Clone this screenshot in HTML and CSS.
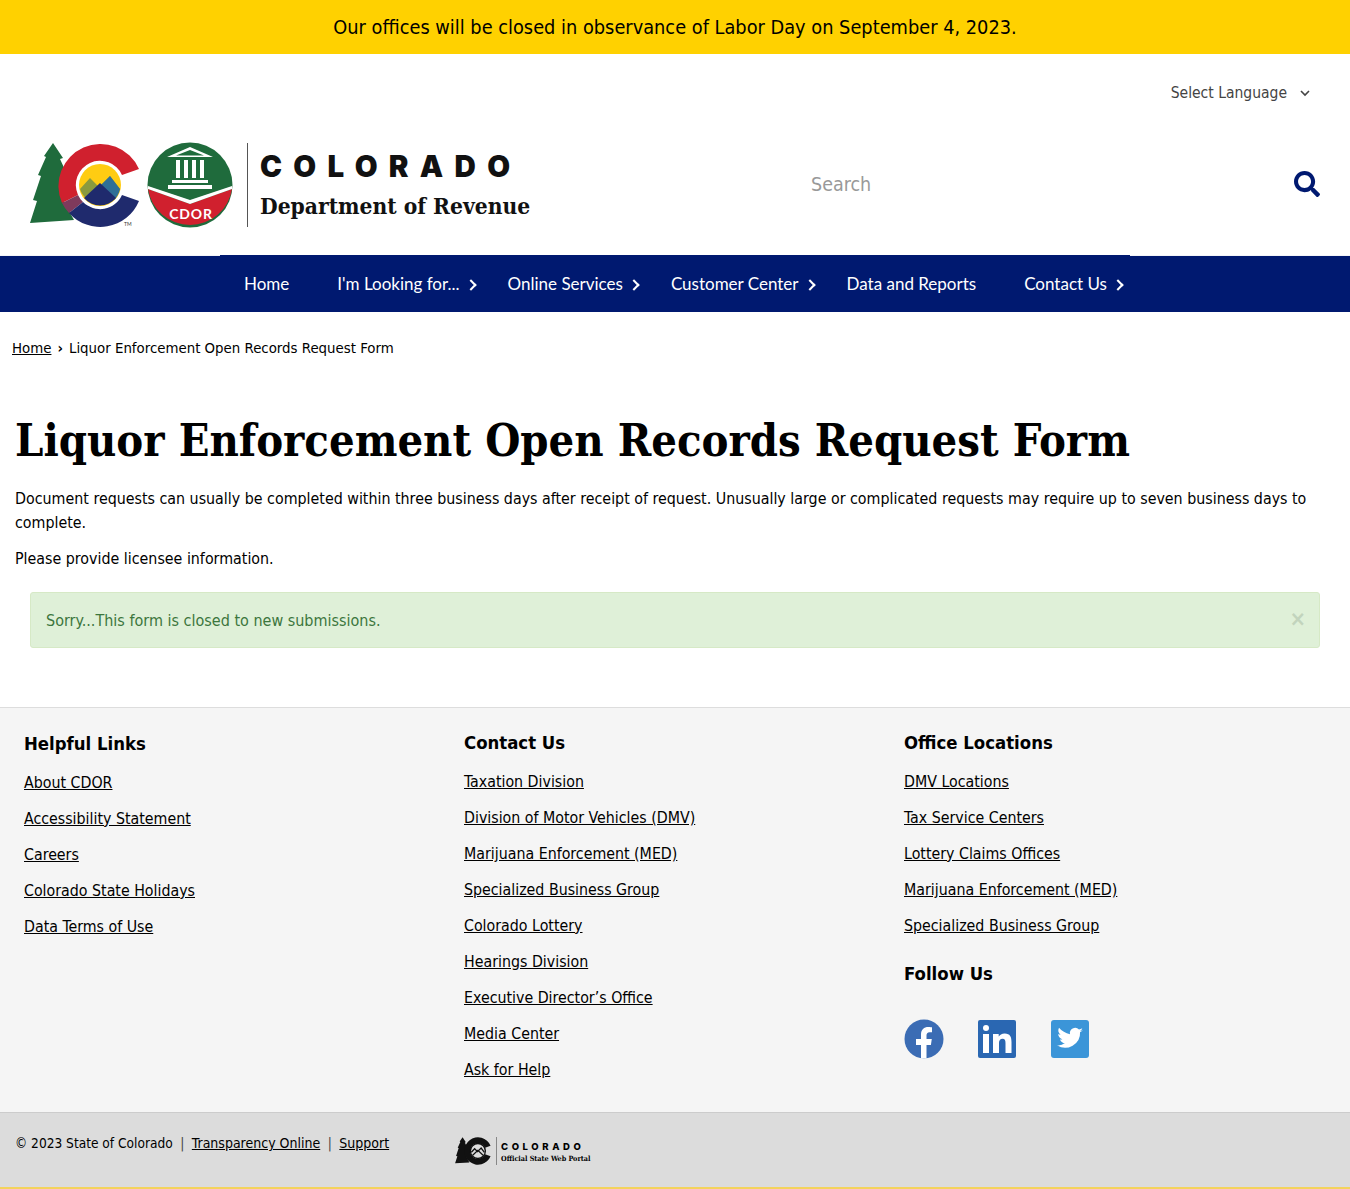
FILE: index.html
```html
<!DOCTYPE html>
<html lang="en">
<head>
<meta charset="utf-8">
<title>Liquor Enforcement Open Records Request Form</title>
<link rel="stylesheet" href="styles.css">
</head>
<body>
<div class="banner">Our offices will be closed in observance of Labor Day on September 4, 2023.</div>
<header class="header">
  <div class="lang-row">
    <span class="lang">Select Language</span>
    <svg class="lang-chev" width="10" height="7" viewBox="0 0 10 7"><path d="M1 1l4 4 4-4" fill="none" stroke="#444" stroke-width="1.6"/></svg>
  </div>
  <div class="brand-row">
    <div class="logo">
      <svg class="logo-marks" width="205" height="86" viewBox="0 0 205 86">
        <path d="M23 1 L33 16 L30 17 L36 30 L34 60 L44 78 L0 81 L7 59 L3 58 L11 34 L8 33 L16 15 L14 14 Z" fill="#1f6b3c"/>
        <path d="M109 27 A42 42 0 0 0 32 61 L48 53 A24 24 0 0 1 92 33 Z" fill="#d0202e"/>
        <path d="M32 61 A42 42 0 0 0 39 71 L53 60 A24 24 0 0 1 48 53 Z" fill="#7f3a5c"/>
        <path d="M39 71 A42 42 0 0 0 109 59 L92 53 A24 24 0 0 1 53 60 Z" fill="#1f2a6d"/>
        <circle cx="70" cy="43" r="23" fill="#fff"/>
        <circle cx="70" cy="43" r="21" fill="#ffcc12"/>
        <path d="M50 47 L60 36 L69 45 L80 34 L90 47 A21 21 0 0 1 50 47 Z" fill="#8a9a3e"/>
        <path d="M69 45 L80 34 L90 47 A21 21 0 0 1 84 58 Z" fill="#2f6f96"/>
        <path d="M54 56 L70 41 L86 56 A21 21 0 0 1 54 56 Z" fill="#1f2a6d"/>
        <text class="tm" x="94" y="84">TM</text>
        <circle cx="160" cy="43" r="42.500" fill="#1f6b3c"/>
        <path d="M118 47 L160 62 L202 47 A42.500 42.500 0 0 1 118 47 Z" fill="#d0202e"/>
        <path d="M118 44 L160 58 L202 44 L202 47 L160 62 L118 47 Z" fill="#fff"/>
        <path d="M160 5 L183 15 L137 15 Z M160 8 L146 13.500 H174 Z" fill="#fff" fill-rule="evenodd"/>
        <path d="M146 18h4v18h-4zM154 18h4v18h-4zM162 18h4v18h-4zM170 18h4v18h-4z" fill="#fff"/>
        <path d="M142 38h36v3h-36zM138 43h44v4h-44z" fill="#fff"/>
        <text class="cdor" x="161" y="77" text-anchor="middle">CDOR</text>
      </svg>
      <span class="logo-rule"></span>
      <div class="logo-text">
        <span class="logo-co">COLORADO</span>
        <span class="logo-dept">Department of Revenue</span>
      </div>
    </div>
    <div class="search">
      <span class="search-ph">Search</span>
      <svg class="search-icon" width="26" height="26" viewBox="0 0 512 512"><path fill="#001970" d="M505 442.700 405.300 343c-4.500-4.500-10.600-7-17-7H372c27.600-35.300 44-79.700 44-128C416 93.100 322.900 0 208 0S0 93.100 0 208s93.100 208 208 208c48.300 0 92.700-16.400 128-44v16.300c0 6.400 2.500 12.500 7 17l99.700 99.700c9.400 9.400 24.600 9.400 33.900 0l28.300-28.300c9.400-9.400 9.400-24.600.1-34zM208 336c-70.700 0-128-57.200-128-128 0-70.700 57.200-128 128-128 70.700 0 128 57.200 128 128 0 70.700-57.200 128-128 128z"/></svg>
    </div>
  </div>
</header>
<nav class="nav">
  <div class="nav-list">
    <a class="nav-item">Home</a>
    <a class="nav-item has-sub">I'm Looking for...</a>
    <a class="nav-item has-sub">Online Services</a>
    <a class="nav-item has-sub">Customer Center</a>
    <a class="nav-item">Data and Reports</a>
    <a class="nav-item has-sub">Contact Us</a>
  </div>
</nav>
<div class="crumbs"><a href="#">Home</a><span class="crumb-sep">›</span><span>Liquor Enforcement Open Records Request Form</span></div>
<main class="main">
  <h1 class="title">Liquor Enforcement Open Records Request Form</h1>
  <p class="para">Document requests can usually be completed within three business days after receipt of request. Unusually large or complicated requests may require up to seven business days to complete.</p>
  <p class="para">Please provide licensee information.</p>
  <div class="alert"><span>Sorry...This form is closed to new submissions.</span><span class="alert-x">×</span></div>
</main>
<footer class="footer">
  <div class="col col-first">
    <h2 class="col-h">Helpful Links</h2>
    <ul class="links">
      <li><a href="#">About CDOR</a></li>
      <li><a href="#">Accessibility Statement</a></li>
      <li><a href="#">Careers</a></li>
      <li><a href="#">Colorado State Holidays</a></li>
      <li><a href="#">Data Terms of Use</a></li>
    </ul>
  </div>
  <div class="col">
    <h2 class="col-h">Contact Us</h2>
    <ul class="links">
      <li><a href="#">Taxation Division</a></li>
      <li><a href="#">Division of Motor Vehicles (DMV)</a></li>
      <li><a href="#">Marijuana Enforcement (MED)</a></li>
      <li><a href="#">Specialized Business Group</a></li>
      <li><a href="#">Colorado Lottery</a></li>
      <li><a href="#">Hearings Division</a></li>
      <li><a href="#">Executive Director’s Office</a></li>
      <li><a href="#">Media Center</a></li>
      <li><a href="#">Ask for Help</a></li>
    </ul>
  </div>
  <div class="col">
    <h2 class="col-h">Office Locations</h2>
    <ul class="links">
      <li><a href="#">DMV Locations</a></li>
      <li><a href="#">Tax Service Centers</a></li>
      <li><a href="#">Lottery Claims Offices</a></li>
      <li><a href="#">Marijuana Enforcement (MED)</a></li>
      <li><a href="#">Specialized Business Group</a></li>
    </ul>
    <h2 class="col-h follow">Follow Us</h2>
    <div class="social">
      <svg width="40" height="40" viewBox="0 0 40 40"><circle cx="20" cy="20" r="19.500" fill="#3b6cb4"/><path d="M17 39.500V26h-5v-6h5v-4.500C17 10.500 20 8 24.300 8c2 0 3.700.3 3.700.3v5h-2.300c-2.400 0-3.200 1.500-3.200 3V20h5.300l-.9 6h-4.400v13.500z" fill="#fff"/></svg>
      <svg width="40" height="40" viewBox="0 0 40 40"><rect x="1" y="1" width="38" height="38" rx="2" fill="#2a67b2"/><circle cx="9" cy="9" r="3" fill="#fff"/><path d="M6 15h6v19H6zM16 15h5.700v2.600c1-1.700 3-3.100 6-3.100 5.500 0 6.800 3.500 6.800 8.500V34h-6V24c0-2.600-.5-4.300-2.900-4.300-2.500 0-3.600 1.700-3.600 4.300v10h-6z" fill="#fff"/></svg>
      <svg width="40" height="40" viewBox="0 0 40 40"><rect x="1" y="1" width="38" height="38" rx="3" fill="#3b95d8"/><path d="M33 11.300c-1 .4-2 .7-3 .8 1.100-.7 1.900-1.700 2.300-2.900-1 .6-2.100 1-3.300 1.300a5.300 5.300 0 0 0-9 4.800C15.600 14.100 11.700 12 9 8.800c-1.400 2.400-.7 5.500 1.600 7-.8 0-1.600-.2-2.400-.7 0 2.500 1.800 4.700 4.200 5.200-.8.200-1.600.2-2.400.1.700 2.100 2.600 3.600 4.900 3.700A10.700 10.700 0 0 1 7 26.300 15 15 0 0 0 30.100 13c1.100-.4 2.100-1 2.900-1.700z" fill="#fff"/></svg>
    </div>
  </div>
</footer>
<div class="legal">
  <div class="legal-text">© 2023 State of Colorado<span class="pipe">|</span><a href="#">Transparency Online</a><span class="pipe">|</span><a href="#">Support</a></div>
  <div class="portal">
    <svg width="36" height="28" viewBox="0 0 110 86">
      <path d="M23 1 L33 16 L30 17 L36 30 L34 60 L44 78 L0 81 L7 59 L3 58 L11 34 L8 33 L16 15 L14 14 Z" fill="#111"/>
      <path d="M109 27 A42 42 0 1 0 109 59 L92 53 A24 24 0 1 1 92 33 Z" fill="#111"/>
      <circle cx="70" cy="43" r="23" fill="#ddd" stroke="#111" stroke-width="4"/>
      <path d="M50 47 L60 36 L69 45 L80 34 L90 47 M54 56 L70 41 L86 56" fill="none" stroke="#111" stroke-width="4"/>
    </svg>
    <span class="portal-rule"></span>
    <div class="portal-text"><span class="portal-co">COLORADO</span><span class="portal-sub">Official State Web Portal</span></div>
  </div>
</div>
</body>
</html>
```
FILE: styles.css
```css
* { box-sizing: border-box; }
html, body { margin: 0; padding: 0; }
body { font-family: "DejaVu Sans", sans-serif; font-stretch: condensed; font-size: 15.850px; color: #000; background: #fff; height: 1189px; overflow: hidden; }
a { color: inherit; }
.banner { height: 54px; background: #ffd100; display: flex; align-items: center; justify-content: center; font-size: 19.800px; }
.header { height: 201px; display: flex; flex-direction: column; padding: 0 30px; }
.lang-row { height: 76px; padding-top: 28px; display: flex; justify-content: flex-end; align-items: flex-start; color: #444; padding-right: 10px; font-size: 15.500px; }
.lang { line-height: 22px; }
.lang-chev { margin: 8px 0 0 13px; }
.brand-row { display: flex; align-items: flex-start; justify-content: space-between; padding-top: 12px; }
.logo { display: flex; align-items: center; }
.cdor { font: bold 14px "Lato", sans-serif; fill: #fff; letter-spacing: .8px; }
.tm { font: 5px "Lato", sans-serif; fill: #333; }
.logo-rule { width: 1px; height: 84px; background: #555; margin: 0 12px; }
.logo-text { display: flex; flex-direction: column; }
.logo-co { font: 900 29.500px/34px "Inter", sans-serif; letter-spacing: 11.300px; color: #111; }
.logo-dept { font: bold 22.600px/30px "DejaVu Serif", serif; font-stretch: condensed; color: #111; margin-top: 8px; }
.search { width: 509px; display: flex; justify-content: space-between; align-items: center; height: 84px; }
.search-ph { font-size: 19.500px; color: #999; }
.nav { height: 57px; background: #001970; border-top: 1px solid #f4f4f8; display: flex; justify-content: center; font-family: "Lato", sans-serif; font-stretch: normal; font-size: 17px; color: #fff; }
.nav-list { width: 910px; height: 57px; margin-top: -1px; padding: 0 0 0 24px; background: #001970; display: flex; align-items: center; gap: 48px; }
.nav-item { position: relative; }
.has-sub::after { content: ""; position: absolute; left: 100%; top: 8px; margin-left: 7px; width: 6px; height: 6px; border-top: 2px solid #fff; border-right: 2px solid #fff; transform: rotate(45deg); }
.crumbs { padding: 24px 12px 0; font-size: 14.850px; line-height: 24px; height: 72px; }
.crumb-sep { margin: 0 6px; font-weight: bold; }
.main { padding: 0 15px; height: 323px; }
.title { font: bold 44.900px/56px "DejaVu Serif", serif; font-stretch: condensed; margin: 0; padding-top: 29px; height: 91px; }
.para { margin: 12px 0 12px; line-height: 24px; }
.alert { margin: 21px 15px 0; height: 56px; background: #dff0d8; border: 1px solid #d6e9c6; border-radius: 3px; color: #3c763d; font-size: 16px; display: flex; align-items: center; justify-content: space-between; padding: 0 13px 0 15px; }
.alert-x { font-size: 22px; font-weight: bold; color: #c2d4bd; padding-bottom: 3px; }
.footer { height: 405px; background: #f5f5f5; border-top: 1px solid #ddd; display: grid; grid-template-columns: repeat(3, 440px); padding: 23px 24px 0; font-size: 15.800px; }
.col-first { padding-top: 1px; }
.col-h { font-size: 18.400px; font-weight: bold; line-height: 24px; margin: 0 0 15px; }
.links { list-style: none; margin: 0; padding: 0; }
.links li { height: 36px; line-height: 24px; }
.follow { margin-top: 12px; }
.social { display: flex; gap: 33px; margin-top: 33px; }
.legal { height: 77px; background: #dcdcdc; border-top: 1px solid #ccc; border-bottom: 2px solid #f3d35c; padding: 20px 15px 0; display: flex; font-size: 13.600px; }
.legal a { font-size: 14px; }
.legal-text { width: 440px; line-height: 20px; }
.pipe { margin: 0 7.500px; color: #444; }
.portal { display: flex; align-items: center; height: 30px; margin-top: 3px; }
.portal-rule { width: 1px; height: 28px; background: #888; margin: 0 4px 0 5px; }
.portal-text { display: flex; flex-direction: column; }
.portal-co { font: 800 9.500px/13px "Inter", sans-serif; letter-spacing: 3.600px; }
.portal-sub { font: bold 7.200px/9px "DejaVu Serif", serif; font-stretch: condensed; margin-top: 1px; }
```
